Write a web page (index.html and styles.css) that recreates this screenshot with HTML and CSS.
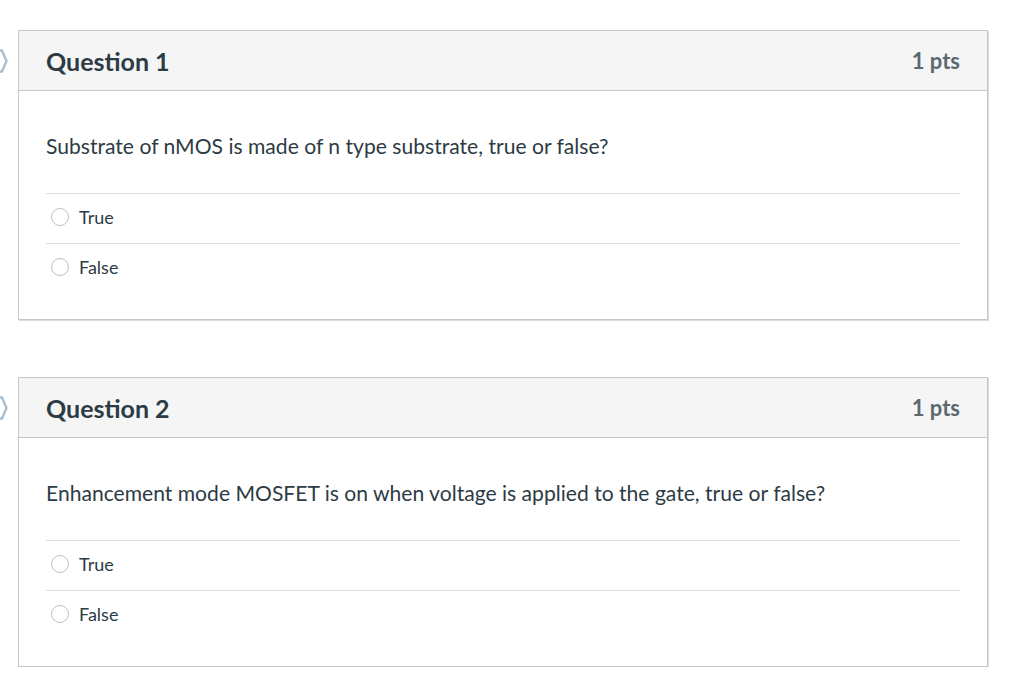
FILE: index.html
```html
<!DOCTYPE html>
<html>
<head>
<meta charset="utf-8">
<link rel="stylesheet" href="styles.css">
</head>
<body>
<div class="quiz">
  <div class="question-row">
    <div class="marker">
      <svg width="10" height="24" viewBox="0 0 10 24"><polyline points="0,1.5 2,1.5 6.5,12 2,22.5 0,22.5" fill="none" stroke="#a9bfcf" stroke-width="2.4"/></svg>
    </div>
    <div class="card">
      <div class="card-header">
        <span class="title">Question 1</span>
        <span class="pts">1 pts</span>
      </div>
      <div class="card-body">
        <div class="q-text">Substrate of nMOS is made of n type substrate, true or false?</div>
        <div class="answers">
          <label class="answer"><span class="radio"></span><span class="a-text">True</span></label>
          <label class="answer"><span class="radio"></span><span class="a-text">False</span></label>
        </div>
      </div>
    </div>
  </div>
  <div class="question-row">
    <div class="marker">
      <svg width="10" height="24" viewBox="0 0 10 24"><polyline points="0,1.5 2,1.5 6.5,12 2,22.5 0,22.5" fill="none" stroke="#a9bfcf" stroke-width="2.4"/></svg>
    </div>
    <div class="card">
      <div class="card-header">
        <span class="title">Question 2</span>
        <span class="pts">1 pts</span>
      </div>
      <div class="card-body">
        <div class="q-text">Enhancement mode MOSFET is on when voltage is applied to the gate, true or false?</div>
        <div class="answers">
          <label class="answer"><span class="radio"></span><span class="a-text">True</span></label>
          <label class="answer"><span class="radio"></span><span class="a-text">False</span></label>
        </div>
      </div>
    </div>
  </div>
</div>
</body>
</html>
```

FILE: styles.css
```css
html, body {
  margin: 0;
  padding: 0;
  background: #ffffff;
}
body {
  font-family: Lato, "Open Sans", sans-serif;
  color: #2d3b45;
}
.quiz {
  display: flex;
  flex-direction: column;
  gap: 57px;
  padding-top: 30px;
}
.question-row {
  display: flex;
  align-items: flex-start;
}
.marker {
  width: 18px;
  flex: none;
  padding-top: 19px;
}
.marker svg {
  display: block;
}
.card {
  width: 968px;
  border: 1px solid #c4c8cc;
  box-shadow: 1px 1px 0 #dcdcdc;
  background: #fff;
}
.card-header {
  height: 59px;
  background: #f5f5f5;
  border-bottom: 1px solid #c4c8cc;
  display: flex;
  align-items: center;
  justify-content: space-between;
  padding: 0 27px;
}
.title {
  font-weight: 700;
  font-size: 25px;
  color: #2d3b45;
}
.pts {
  font-weight: 700;
  font-size: 22px;
  color: #5b6870;
}
.card-body {
  padding: 0 27px 26px;
}
.q-text {
  margin-top: 43px;
  line-height: 24px;
  font-size: 21.1px;
}
.answers {
  margin-top: 35px;
}
.answer {
  display: flex;
  align-items: center;
  height: 45px;
  padding-bottom: 4px;
  border-top: 1px solid #dddddd;
  font-size: 18px;
}
.radio {
  width: 16px;
  height: 16px;
  border: 1px solid #c0c0c0;
  border-radius: 50%;
  margin-left: 5px;
  margin-right: 10px;
  background: #fff;
  flex: none;
}
.a-text {
  color: #2d3b45;
}
```
